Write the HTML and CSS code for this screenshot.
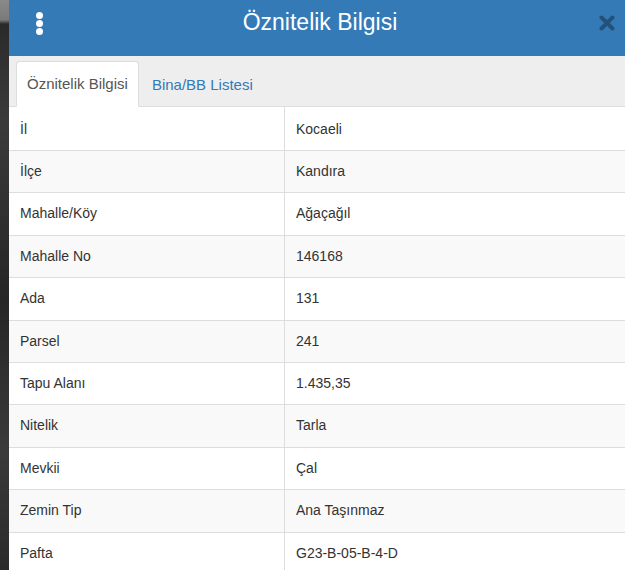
FILE: index.html
```html
<!DOCTYPE html>
<html lang="tr">
<head>
<meta charset="utf-8">
<title>Öznitelik Bilgisi</title>
<link rel="stylesheet" href="styles.css">
</head>
<body>
<div class="page">
  <div class="backdrop"></div>
  <div class="panel">
    <div class="header">
      <span class="kebab"><i></i><i></i><i></i></span>
      <h1 class="title">Öznitelik Bilgisi</h1>
      <svg class="close" width="16" height="16" viewBox="0 0 16 16"><path d="M2.5 2.5 L13.5 13.5 M13.5 2.5 L2.5 13.5" stroke="currentColor" stroke-width="4" stroke-linecap="round"/></svg>
    </div>
    <div class="tabs">
      <div class="tab active">Öznitelik Bilgisi</div>
      <div class="tab">Bina/BB Listesi</div>
    </div>
    <table class="attrs">
      <tbody>
        <tr><td>İl</td><td>Kocaeli</td></tr>
        <tr><td>İlçe</td><td>Kandıra</td></tr>
        <tr><td>Mahalle/Köy</td><td>Ağaçağıl</td></tr>
        <tr><td>Mahalle No</td><td>146168</td></tr>
        <tr><td>Ada</td><td>131</td></tr>
        <tr><td>Parsel</td><td>241</td></tr>
        <tr><td>Tapu Alanı</td><td>1.435,35</td></tr>
        <tr><td>Nitelik</td><td>Tarla</td></tr>
        <tr><td>Mevkii</td><td>Çal</td></tr>
        <tr><td>Zemin Tip</td><td>Ana Taşınmaz</td></tr>
        <tr><td>Pafta</td><td>G23-B-05-B-4-D</td></tr>
      </tbody>
    </table>
  </div>
</div>
</body>
</html>
```
FILE: styles.css
```css
html, body {
  margin: 0;
  padding: 0;
  height: 100%;
  overflow: hidden;
}
body {
  font-family: "Liberation Sans", Arial, sans-serif;
  font-size: 14px;
  color: #333;
  background: #2e2e2e;
}
.page {
  display: flex;
  height: 570px;
}
.backdrop {
  width: 9px;
  flex: none;
  background: linear-gradient(to bottom, #8a8a8a 0, #7a7a7a 20px, #2a2a2a 24px, #3b3b3b 120px, #262626 300px, #3a3a3a 450px, #2b2b2b 570px);
}
.panel {
  flex: 1;
  background: #fff;
  display: flex;
  flex-direction: column;
  min-width: 0;
}
.header {
  flex: none;
  height: 56px;
  background: #337ab7;
  display: flex;
  align-items: center;
  position: relative;
  color: #fff;
}
.kebab {
  width: 60px;
  display: flex;
  flex-direction: column;
  align-items: center;
  gap: 1px;
  margin-top: -10px;
}
.kebab i {
  width: 7px;
  height: 7px;
  border-radius: 50%;
  background: #fff;
}
.title {
  flex: 1;
  margin: -12px 54px 0 0;
  text-align: center;
  font-size: 23px;
  font-weight: normal;
}
.close {
  position: absolute;
  right: 10px;
  top: 15px;
  color: rgba(0, 0, 0, 0.33);
}
.tabs {
  flex: none;
  height: 51px;
  background: #eee;
  display: flex;
  align-items: flex-end;
  padding-left: 7px;
  border-bottom: 1px solid #ddd;
  box-sizing: border-box;
  font-size: 15px;
}
.tab {
  height: 45px;
  line-height: 44px;
  padding: 0 10px;
  color: #337ab7;
  box-sizing: border-box;
  margin-bottom: -1px;
  border: 1px solid transparent;
  border-radius: 4px 4px 0 0;
  margin-right: 2px;
}
.tab.active {
  background: #fff;
  color: #555;
  border-color: #ddd #ddd transparent #ddd;
  height: 46px;
}
.attrs {
  flex: none;
  width: 100%;
  border-collapse: collapse;
}
.attrs td {
  padding: 11px 11px;
  line-height: 19.4px;
  border-top: 1px solid #ddd;
  vertical-align: top;
}
.attrs tr:first-child td {
  border-top: none;
  padding-top: 12.5px;
}
.attrs td:first-child {
  width: 253px;
  border-right: 1px solid #ddd;
}
.attrs tr:nth-child(even) td {
  background: #f9f9f9;
}
```
